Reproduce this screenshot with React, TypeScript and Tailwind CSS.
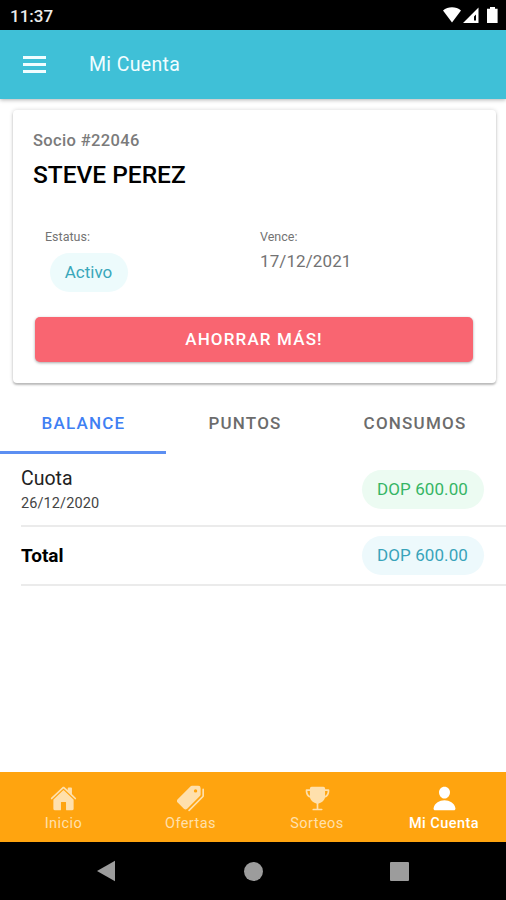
import type { ComponentType } from 'react';
import clsx from 'clsx';
import { IoHome, IoPerson, IoPricetags, IoTrophy } from 'react-icons/io5';

interface BalanceItem {
  label: string;
  date?: string;
  amount: string;
}

interface NavItem {
  label: string;
  icon: ComponentType<{ className?: string }>;
}

const tabs = ['Balance', 'Puntos', 'Consumos'];

const items: BalanceItem[] = [
  { label: 'Cuota', date: '26/12/2020', amount: 'DOP 600.00' },
  { label: 'Total', amount: 'DOP 600.00' },
];

const navItems: NavItem[] = [
  { label: 'Inicio', icon: IoHome },
  { label: 'Ofertas', icon: IoPricetags },
  { label: 'Sorteos', icon: IoTrophy },
  { label: 'Mi Cuenta', icon: IoPerson },
];

function StatusBar() {
  return (
    <div className="flex h-[30px] items-center justify-between bg-black pl-[10px] pr-2 text-white">
      <span className="pt-[3px] text-[17px] font-medium leading-none text-[#ececec]">11:37</span>
      <svg width="56" height="18" viewBox="0 0 56 18" fill="currentColor">
        <path d="M1 4.6C6 .2 14 .2 19 4.6L10 16.5z" />
        <path fillRule="evenodd" d="M36.5 1.5v15.5H21zM34 8.5v6h-2v-4z" />
        <path d="M48 1h5v1.7h2.6v14.3H45V2.7h3z" />
      </svg>
    </div>
  );
}

function Header() {
  return (
    <header className="relative z-10 flex h-[69px] items-center bg-[#3fc0d7] pl-[23px] text-white shadow-[0_1px_4px_rgba(0,0,0,0.3)]">
      <button className="flex w-[23px] flex-col gap-1" aria-label="Menú">
        <span className="h-[3px] bg-[#f1fdff]" />
        <span className="h-[3px] bg-[#f1fdff]" />
        <span className="h-[3px] bg-[#f1fdff]" />
      </button>
      <h1 className="ml-[43px] text-[19.5px] leading-none tracking-[0.35px] text-[#f1fdff]">Mi Cuenta</h1>
    </header>
  );
}

function AccountCard() {
  return (
    <section className="mx-[13px] mt-[11px] h-[273px] w-[483px] rounded-[4px] px-5 pt-[21px] shadow-[0_2px_2px_rgba(0,0,0,0.22),0_0_4px_rgba(0,0,0,0.16)]">
      <p className="text-[16.5px] font-medium leading-5 tracking-[0.35px] text-[#7b7b7b]">Socio #22046</p>
      <h2 className="mt-2 text-[24.5px] font-medium leading-8 tracking-[-0.02px] text-black">STEVE PEREZ</h2>
      <div className="mt-[38px] grid h-[88px] grid-cols-[215px_1fr] pl-3 text-[#737373]">
        <div>
          <p className="text-[12.5px] leading-4">Estatus:</p>
          <span className="ml-[5px] mt-2 flex h-[39px] w-[78px] items-center justify-center rounded-full bg-[#edfbfc] pr-px text-[17px] text-[#39a7ba]">
            Activo
          </span>
        </div>
        <div>
          <p className="text-[12.5px] leading-4">Vence:</p>
          <p className="mt-1.5 text-[17px] leading-5 tracking-[0.1px]">17/12/2021</p>
        </div>
      </div>
      <button className="ml-0.5 h-[45px] w-[438px] rounded-[5px] bg-[#f96571] pt-px text-[17px] font-medium uppercase tracking-[1.15px] text-white shadow-[0_1px_3px_rgba(0,0,0,0.35)]">
        Ahorrar más!
      </button>
    </section>
  );
}

function Tabs() {
  return (
    <div className="mt-[11px] grid h-[60px] grid-cols-[166px_157px_183px]">
      {tabs.map((tab, i) => (
        <button
          key={tab}
          className={clsx(
            'flex items-center justify-center border-b-3 pl-px pt-[3px] text-[17px] font-medium uppercase tracking-[1.2px]',
            i === 0 ? 'border-[#5c8ff2] text-[#3f80f3]' : 'border-transparent text-[#6c6c6c]',
          )}
        >
          {tab}
        </button>
      ))}
    </div>
  );
}

function BalanceList() {
  return (
    <ul className="pl-[21px]">
      {items.map((item) => (
        <li
          key={item.label}
          className={clsx(
            'flex items-center justify-between border-b-2 border-[#ebebeb] pr-[22px]',
            item.date ? 'h-[73px]' : 'h-[59px]',
          )}
        >
          <div className={clsx(item.date && 'pt-0.5')}>
            <p className={clsx('leading-6', item.date ? 'text-[19.5px] text-[#222]' : 'text-[19px] font-bold text-black')}>
              {item.label}
            </p>
            {item.date && <p className="mt-[3px] text-[14.5px] leading-5 tracking-[0.1px] text-[#444]">{item.date}</p>}
          </div>
          <span
            className={clsx(
              'flex h-[39px] w-[122px] items-center justify-center rounded-full pr-px text-[17px] tracking-[0.1px]',
              item.date ? 'mb-px bg-[#ecfbf2] pt-px text-[#36b565]' : 'bg-[#edf9fc] text-[#39a3ba]',
            )}
          >
            {item.amount}
          </span>
        </li>
      ))}
    </ul>
  );
}

function BottomNav() {
  return (
    <nav className="mt-auto grid h-[70px] grid-cols-[127px_127px_126px_126px] bg-[#ffa40f]">
      {navItems.map(({ label, icon: Icon }) => (
        <a
          key={label}
          className={clsx(
            'flex flex-col items-center pt-[13px]',
            label === 'Mi Cuenta' ? 'pl-0.5 font-medium text-white' : 'text-[#ffe0ac]',
          )}
        >
          <Icon className="size-[27px]" />
          <span className="mt-[3px] text-[14.5px] leading-[18px] tracking-[0.45px]">{label}</span>
        </a>
      ))}
    </nav>
  );
}

function SystemNav() {
  return (
    <div className="flex h-[58px] items-center justify-between bg-black pl-24 pr-[97px] text-[#9c9c9c]">
      <svg width="20" height="22" viewBox="0 0 20 22" fill="currentColor">
        <path d="M19 .8v20.4L1 11z" />
      </svg>
      <span className="size-[19px] rounded-full bg-[#9c9c9c]" />
      <span className="size-[19px] rounded-[1px] bg-[#9c9c9c]" />
    </div>
  );
}

export default function App() {
  return (
    <div className="flex h-[900px] w-[506px] flex-col overflow-hidden bg-white font-[Roboto,sans-serif]">
      <StatusBar />
      <Header />
      <AccountCard />
      <Tabs />
      <BalanceList />
      <BottomNav />
      <SystemNav />
    </div>
  );
}
